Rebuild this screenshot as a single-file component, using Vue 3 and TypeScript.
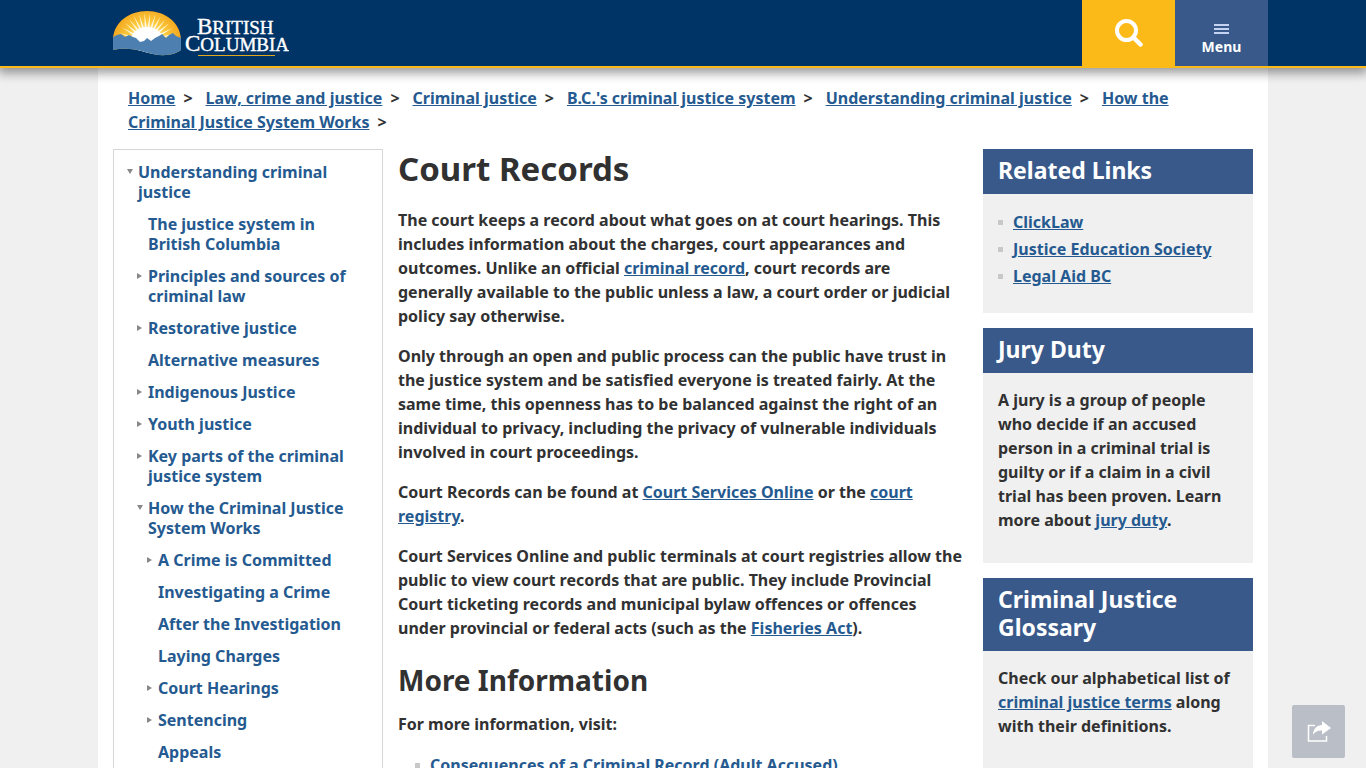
<script setup lang="ts">
interface NavItem {
  label: string
  level: number
  state?: 'open' | 'closed'
}

const crumbs: string[] = [
  'Home',
  'Law, crime and justice',
  'Criminal justice',
  "B.C.'s criminal justice system",
  'Understanding criminal justice',
  'How the Criminal Justice System Works',
]

const navItems: NavItem[] = [
  { label: 'Understanding criminal justice', level: 1, state: 'open' },
  { label: 'The justice system in British Columbia', level: 2 },
  { label: 'Principles and sources of criminal law', level: 2, state: 'closed' },
  { label: 'Restorative justice', level: 2, state: 'closed' },
  { label: 'Alternative measures', level: 2 },
  { label: 'Indigenous Justice', level: 2, state: 'closed' },
  { label: 'Youth justice', level: 2, state: 'closed' },
  { label: 'Key parts of the criminal justice system', level: 2, state: 'closed' },
  { label: 'How the Criminal Justice System Works', level: 2, state: 'open' },
  { label: 'A Crime is Committed', level: 3, state: 'closed' },
  { label: 'Investigating a Crime', level: 3 },
  { label: 'After the Investigation', level: 3 },
  { label: 'Laying Charges', level: 3 },
  { label: 'Court Hearings', level: 3, state: 'closed' },
  { label: 'Sentencing', level: 3, state: 'closed' },
  { label: 'Appeals', level: 3 },
]

const relatedLinks: string[] = ['ClickLaw', 'Justice Education Society', 'Legal Aid BC']

const rays: number[] = [-84, -72, -60, -49, -38, -27, -16, -5, 6, 17, 28, 39, 50, 61, 73, 85]
</script>

<template>
  <div class="page">
    <header class="topbar">
      <div class="topbar-inner">
        <a class="logo" href="#" aria-label="British Columbia">
          <svg width="176" height="48" viewBox="0 0 176 48">
            <defs>
              <clipPath id="dome">
                <path d="M0 29C1 12 16 1 34 1s33 11 34 28v11c-9 7-24 6-36 2C20 38 9 38 0 40z" />
              </clipPath>
              <radialGradient id="glow" gradientUnits="userSpaceOnUse" cx="34" cy="32" r="34">
                <stop offset="0.35" stop-color="#ffe08a" />
                <stop offset="0.6" stop-color="#fcc93c" />
                <stop offset="1" stop-color="#f3a81f" />
              </radialGradient>
            </defs>
            <g clip-path="url(#dome)">
              <rect width="68" height="48" fill="url(#glow)" />
              <path
                v-for="angle in rays"
                :key="angle"
                d="M32.8 20L34 3L35.2 20z"
                fill="#fff8df"
                :transform="`rotate(${angle} 34 32)`"
              />
              <ellipse cx="34" cy="30" rx="16" ry="13" fill="#fff" />
              <path
                d="M0 27l4-2 4-1 4 3 4-2 4 2 3 1 4 4 4-1 3-3 4 3 4-3 4-2 3-2 4 4 3-3 4-2 3 3 5 2v19H0z"
                fill="#4d80b1"
              />
            </g>
            <g class="wordmark" fill="#fff">
              <text x="84" y="24"><tspan class="cap">B</tspan>RITISH</text>
              <text x="72" y="41"><tspan class="cap">C</tspan>OLUMBIA</text>
            </g>
            <rect x="85" y="45" width="77" height="1" fill="#e0a820" />
          </svg>
        </a>
        <div class="actions">
          <button class="action search" type="button" aria-label="Search">
            <svg width="28" height="28" viewBox="0 0 28 28" fill="none" stroke="#fff">
              <circle cx="11.5" cy="11.5" r="9.5" stroke-width="4" />
              <path d="M19 19l6.5 6.5" stroke-width="4.5" stroke-linecap="round" />
            </svg>
          </button>
          <button class="action menu" type="button">
            <svg width="15" height="10" viewBox="0 0 15 10" fill="#c5d3f2">
              <path d="M0 0h15v2H0zM0 4h15v2H0zM0 8h15v2H0z" />
            </svg>
            <span>Menu</span>
          </button>
        </div>
      </div>
    </header>

    <div class="container">
      <nav class="breadcrumb" aria-label="Breadcrumb">
        <template v-for="crumb in crumbs" :key="crumb">
          <a href="#">{{ crumb }}</a><span class="sep">&gt;</span><wbr />
        </template>
      </nav>

      <div class="columns">
        <nav class="sidenav" aria-label="Section">
          <ul>
            <li
              v-for="item in navItems"
              :key="item.label"
              :class="['level-' + item.level, item.state]"
            >
              <a href="#">{{ item.label }}</a>
            </li>
          </ul>
        </nav>

        <main class="content">
          <h1>Court Records</h1>
          <p>
            The court keeps a record about what goes on at court hearings. This includes information
            about the charges, court appearances and outcomes. Unlike an official
            <a href="#">criminal record</a>, court records are generally available to the public
            unless a law, a court order or judicial policy say otherwise.
          </p>
          <p>
            Only through an open and public process can the public have trust in the justice system
            and be satisfied everyone is treated fairly. At the same time, this openness has to be
            balanced against the right of an individual to privacy, including the privacy of
            vulnerable individuals involved in court proceedings.
          </p>
          <p>
            Court Records can be found at <a href="#">Court Services Online</a> or the
            <a href="#">court registry</a>.
          </p>
          <p>
            Court Services Online and public terminals at court registries allow the public to view
            court records that are public. They include Provincial Court ticketing records and
            municipal bylaw offences or offences under provincial or federal acts (such as the
            <a href="#">Fisheries Act</a>).
          </p>
          <h2>More Information</h2>
          <p>For more information, visit:</p>
          <ul class="bullets">
            <li><a href="#">Consequences of a Criminal Record (Adult Accused)</a></li>
          </ul>
        </main>

        <aside class="widgets">
          <section class="widget">
            <h3>Related Links</h3>
            <div class="widget-body">
              <ul class="bullets">
                <li v-for="link in relatedLinks" :key="link"><a href="#">{{ link }}</a></li>
              </ul>
            </div>
          </section>
          <section class="widget">
            <h3>Jury Duty</h3>
            <div class="widget-body">
              <p>
                A jury is a group of people who decide if an accused person in a criminal trial is
                guilty or if a claim in a civil trial has been proven. Learn more about
                <a href="#">jury duty</a>.
              </p>
            </div>
          </section>
          <section class="widget">
            <h3>Criminal Justice Glossary</h3>
            <div class="widget-body">
              <p>
                Check our alphabetical list of <a href="#">criminal justice terms</a> along with
                their definitions.
              </p>
            </div>
          </section>
        </aside>
      </div>
    </div>

    <button class="share" type="button" aria-label="Share">
      <svg width="26" height="24" viewBox="0 0 26 24">
        <path d="M9 5.5H2.5v15.5h18v-5" fill="none" stroke="#fff" stroke-width="1.5" />
        <path d="M16 1l9 7-9 6.5v-4c-4 0-7 1-9 4.5 0-6 4-10 9-10z" fill="#fff" />
      </svg>
    </button>
  </div>
</template>

<style>
body {
  margin: 0;
  background: #f0f0f0;
}
</style>

<style scoped>
.page {
  font-family: 'Noto Sans', 'Open Sans', sans-serif;
  font-size: 16px;
  font-weight: 700;
  line-height: 24px;
  color: #313132;
}
.page * {
  box-sizing: border-box;
}
a {
  color: #255a90;
}
button {
  border: 0;
  padding: 0;
  font: inherit;
  cursor: pointer;
}
ul {
  list-style: none;
  margin: 0;
  padding: 0;
}
.topbar {
  position: sticky;
  top: 0;
  z-index: 2;
  background: #003366;
  border-bottom: 2px solid #fcba19;
  box-shadow: 0 3px 10px 2px rgba(0, 0, 0, 0.4);
}
.topbar-inner {
  display: flex;
  justify-content: space-between;
  max-width: 1170px;
  height: 66px;
  margin: 0 auto;
  padding-left: 15px;
}
.logo {
  display: flex;
  padding-top: 10px;
  text-decoration: none;
}
.wordmark {
  font-family: 'Liberation Serif', serif;
  font-size: 19px;
  font-weight: 400;
  stroke: #fff;
  stroke-width: 0.4px;
}
.cap {
  font-size: 23px;
}
.actions {
  display: flex;
}
.action {
  display: flex;
  flex-direction: column;
  align-items: center;
  justify-content: center;
  width: 93px;
  color: #fff;
}
.search {
  background: #fcba19;
}
.menu {
  justify-content: flex-start;
  gap: 3px;
  padding-top: 24px;
  background: #38598a;
  font-size: 14px;
  font-weight: 700;
  line-height: 20px;
}
.container {
  max-width: 1170px;
  min-height: 700px;
  margin: 0 auto;
  padding: 18px 15px 15px;
  background: #fff;
}
.breadcrumb {
  padding: 0 15px;
  margin-bottom: 15px;
}
.sep {
  margin: 0 13px 0 8px;
}
.columns {
  display: grid;
  grid-template-columns: 270px minmax(0, 1fr) 270px;
  gap: 15px;
}
.sidenav {
  padding: 12px;
  border: 1px solid #d6d6d6;
  line-height: 20px;
}
.sidenav li {
  position: relative;
  margin-bottom: 12px;
}
.sidenav a {
  text-decoration: none;
}
.level-1 {
  margin-left: 12px;
}
.level-2 {
  margin-left: 22px;
}
.level-3 {
  margin-left: 32px;
}
.open::before,
.closed::before {
  content: '';
  position: absolute;
  top: 7px;
  left: -11px;
  border: 3px solid transparent;
}
.open::before {
  border-top: 5px solid #888;
  border-bottom: 0;
}
.closed::before {
  border-left: 5px solid #888;
  border-right: 0;
}
h1,
h2,
h3,
p {
  margin: 0;
}
h1 {
  margin-bottom: 19px;
  font-size: 33px;
  font-weight: 700;
  line-height: 40px;
}
h2 {
  margin: 24px 0 16px;
  font-size: 28px;
  font-weight: 700;
  line-height: 32px;
}
.content p {
  margin-bottom: 16px;
}
.bullets li {
  position: relative;
  padding: 1px 0 2px 15px;
}
.bullets li::before {
  content: '';
  position: absolute;
  top: 11px;
  left: 0;
  width: 5px;
  height: 5px;
  background: #c8c8c8;
}
.content .bullets {
  padding-left: 17px;
}
.widgets {
  display: flex;
  flex-direction: column;
  gap: 15px;
}
.widget h3 {
  padding: 7px 15px 10px;
  background: #38598a;
  color: #fff;
  font-size: 23px;
  font-weight: 700;
  line-height: 28px;
}
.widget-body {
  padding: 15px;
  background: #f0f0f0;
}
.widget-body p {
  margin-bottom: 16px;
}
.widget-body .bullets {
  margin-bottom: 8px;
}
.share {
  position: fixed;
  right: 21px;
  bottom: 10px;
  display: flex;
  align-items: center;
  justify-content: center;
  width: 53px;
  height: 53px;
  border-radius: 2px;
  background: #babec7;
}
</style>
